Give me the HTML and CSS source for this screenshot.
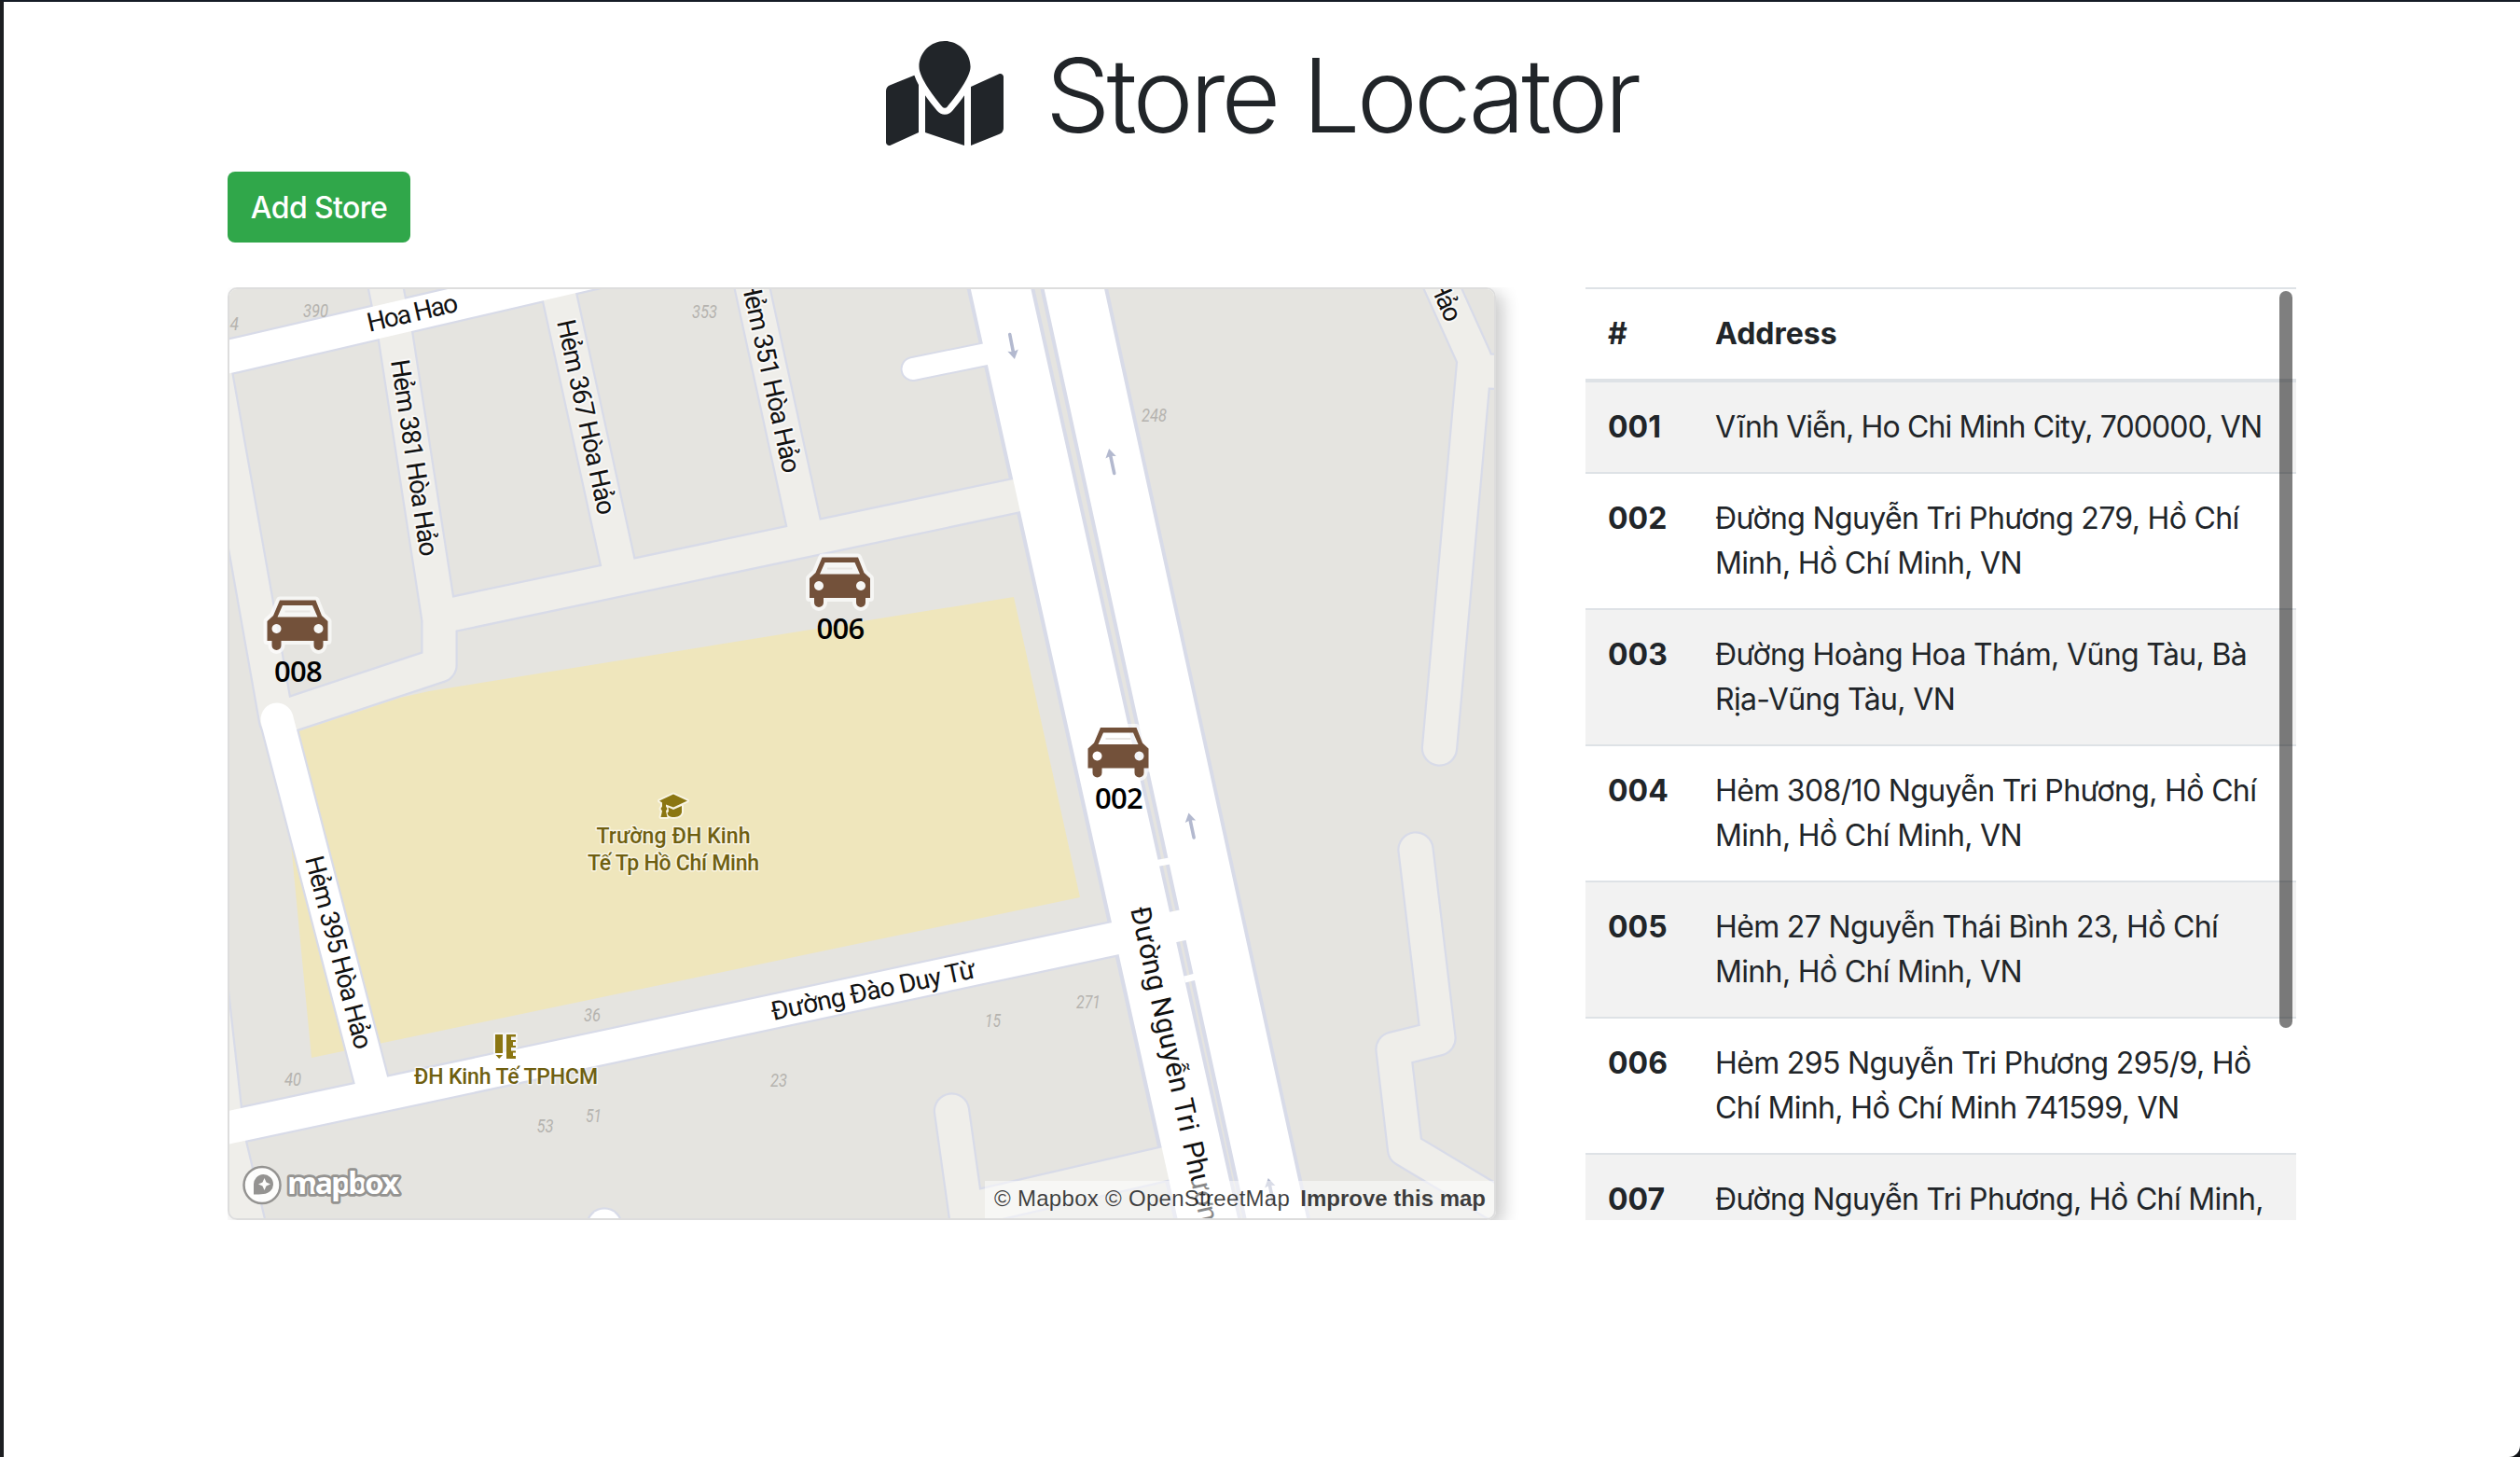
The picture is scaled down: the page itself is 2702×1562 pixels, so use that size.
FILE: index.html
```html
<!DOCTYPE html>
<html lang="en">
<head>
<meta charset="utf-8">
<title>Store Locator</title>
<link rel="stylesheet" href="styles.css">
</head>
<body>
<main class="container">
  <h1 class="title">
    <svg class="title-icon" viewBox="0 0 576 512" aria-hidden="true"><path d="M288 0c-69.59 0-126 56.41-126 126 0 56.26 82.35 158.8 113.9 196.02 6.39 7.54 17.82 7.54 24.2 0C331.65 284.8 414 182.26 414 126 414 56.41 357.59 0 288 0zM20.12 215.95A32.006 32.006 0 0 0 0 245.66v250.32c0 11.32 11.43 19.06 21.94 14.86L160 448V214.92c-8.84-15.98-16.07-31.54-21.25-46.42L20.12 215.95zM288 359.67c-14.07 0-27.38-6.18-36.51-16.96-19.66-23.2-40.57-49.62-59.49-76.72v182l192 64V266c-18.92 27.09-39.82 53.52-59.49 76.72-9.13 10.77-22.44 16.95-36.51 16.95zm266.06-198.51L416 224v288l139.88-55.95A31.996 31.996 0 0 0 576 426.34V176.02c0-11.32-11.43-19.06-21.94-14.86z"/></svg>
    <span class="title-text">Store Locator</span>
  </h1>
  <a class="btn">Add Store</a>
  <div class="row">
    <div class="map-col">
      <div class="map">
        <svg class="map-canvas" viewBox="246 310 1356 996">
          <defs>
            <g id="car">
              <path class="halo" d="M13.5 0h38.5l6.5 16.500 6.500 6v21h-5v5a5 5 0 0 1-10 0v-5h-35v5a5 5 0 0 1-10 0v-5h-5v-21l6.500-6z"/>
              <path class="car-body" fill-rule="evenodd" d="M13.500 0h38.500l6.500 16.500 6.500 6v21h-5v5a5 5 0 0 1-10 0v-5h-35v5a5 5 0 0 1-10 0v-5h-5v-21l6.500-6zM16.500 5.500l-5.500 12.500h43l-5.500-12.500zM10 25.500a5 5 0 1 0 .01 0zM55 25.500a5 5 0 1 0 .01 0z"/>
              <path class="car-glass" d="M19 12h27"/>
            </g>
            <g id="arrow"><path d="M0 26V7" stroke="#b3b9cf" stroke-width="3.600" stroke-linecap="round"/><path d="M0-1l5.800 9.500L0 7l-5.800 1.500z" fill="#b3b9cf"/></g>
            <g id="lanes">
              <path d="M402 250L414 310L424 360L471 664V713L302 769"/>
              <path d="M471 661.500L1100 529"/>
              <path d="M596 300L663 606"/>
              <path d="M797 265L862 563"/>
              <path d="M206 262L296.500 772"/>
              <path d="M226 1060L240.500 1190L246 1228L268 1320"/>
              <path d="M1520 250L1581 385L1543.500 802M1581 397L1630 400"/>
              <path d="M1518 911L1542 1113L1494 1125L1506.500 1232L1622 1301"/>
              <path d="M1020.500 1191L1040 1330M1040 1296L1260 1245"/>
            </g>
            <g id="streets">
              <path d="M230 386L700 277"/>
              <path d="M297 771L400.500 1168"/>
              <path d="M230 1212L1215 1002"/>
              <path d="M648 1314V1340"/>
            </g>
          </defs>
          <rect x="240" y="300" width="1370" height="1010" fill="#e5e4e0"/>
          <path fill="#efe6bc" d="M1087 640L1158 962L334 1134L313 915L302 790L429 748L460 741z"/>
          <g class="lines">
            <g class="edge">
              <use href="#lanes"/>
              <use href="#streets"/>
              <path class="spur-edge" d="M979 395.500L1065 378"/>
              <path class="avenue-edge" d="M1062 260L1302 1340M1141 260L1376 1340"/>
            </g>
            <use href="#lanes" class="lane"/>
            <use href="#streets" class="street"/>
            <path class="spur" d="M979 395.500L1065 378"/>
            <path class="avenue" d="M1062 260L1299 1325M1141 260L1374 1330"/>
            <path class="gap" d="M1238 926L1254 923" stroke-width="7"/>
            <path class="gap" d="M1248 996L1276 990" stroke-width="33"/>
            <path class="gap" d="M1270 1050L1286 1046" stroke-width="7"/>
          </g>
          <use href="#arrow" transform="translate(1087.700 384) rotate(169)"/>
          <use href="#arrow" transform="translate(1189.300 482) rotate(-12)"/>
          <use href="#arrow" transform="translate(1274.700 872.500) rotate(-12)"/>
          <use href="#arrow" transform="translate(1360 1264) rotate(-12)"/>
          <g class="house">
            <text x="237" y="354" textLength="19" lengthAdjust="spacingAndGlyphs">94</text>
            <text x="325" y="339.600" textLength="27" lengthAdjust="spacingAndGlyphs">390</text>
            <text x="742" y="340.700" textLength="27" lengthAdjust="spacingAndGlyphs">353</text>
            <text x="1224" y="452" textLength="27" lengthAdjust="spacingAndGlyphs">248</text>
            <text x="305" y="1164" textLength="18" lengthAdjust="spacingAndGlyphs">40</text>
            <text x="626" y="1094.600" textLength="18" lengthAdjust="spacingAndGlyphs">36</text>
            <text x="575.500" y="1214" textLength="18" lengthAdjust="spacingAndGlyphs">53</text>
            <text x="628" y="1203" textLength="17" lengthAdjust="spacingAndGlyphs">51</text>
            <text x="826" y="1165" textLength="18" lengthAdjust="spacingAndGlyphs">23</text>
            <text x="1056" y="1100.500" textLength="17" lengthAdjust="spacingAndGlyphs">15</text>
            <text x="1154" y="1081" textLength="26" lengthAdjust="spacingAndGlyphs">271</text>
          </g>
          <g class="road-name">
            <text transform="translate(396 355.700) rotate(-13)" textLength="99">Hoa Hao</text>
            <text transform="translate(419 387) rotate(81.400)" textLength="213">Hẻm 381 Hòa Hảo</text>
            <text transform="translate(597 345) rotate(77.900)" textLength="213">Hẻm 367 Hòa Hảo</text>
            <text transform="translate(794.300 300.500) rotate(77.600)" textLength="213">Hẻm 351 Hòa Hảo</text>
            <text transform="translate(1551 347) rotate(66)" text-anchor="end" textLength="98">Hòa Hảo</text>
            <text transform="translate(327 920.500) rotate(75.300)" textLength="213">Hẻm 395 Hòa Hảo</text>
            <text transform="translate(829 1094) rotate(-11.900)" textLength="223">Đường Đào Duy Từ</text>
            <text class="big" transform="translate(1212 974.500) rotate(77.400)" textLength="246">Đường Nguyễn Tri</text>
            <text class="big" transform="translate(1268 1226) rotate(77.400)" textLength="104">Phương</text>
          </g>
          <g class="poi">
            <g transform="translate(706 850)">
              <path class="poi-icon" d="M16 1.500L31 8.500L16 15.500L8 12.500V14.500L9.500 17L8 19.500L9.500 26H2.500L4 19.500L2.500 17L4 14.500V10.500L1 8.500zM10.500 15.500L16 18L25 14V21c-1 4-5 5-9 5-3 0-6-1-6.500-4.500l1.500-1.500z"/>
            </g>
            <path class="poi-icon" d="M531 1109h8v20h-8zM531.500 1131h7.500l-3.800 4zM543 1109h10v2.500h-5v3.500h5v2h-3v4h3v2h-5v3.500h5v2h-3v3.500h3v3h-10z"/>
            <text x="639.500" y="904" textLength="165">Trường ĐH Kinh</text>
            <text x="630" y="933" textLength="184">Tế Tp Hồ Chí Minh</text>
            <text x="444" y="1162" textLength="197">ĐH Kinh Tế TPHCM</text>
          </g>
          <g class="store">
            <use href="#car" x="868" y="597.500"/><text x="901" y="685">006</text>
            <use href="#car" x="286.500" y="643.500"/><text x="319.500" y="730.500">008</text>
            <use href="#car" x="1166.500" y="780"/><text x="1199.500" y="867">002</text>
          </g>
          <g class="logo">
            <circle cx="281" cy="1270.500" r="19.500"/>
            <path class="logo-mark" fill-rule="evenodd" d="M272 1280.500V1270a10.500 10.500 0 1 1 10.500 10c-3 .5-7 .5-10.500.5zM283.500 1263l-2 4.500-4.500 2 4.500 2 2 4.500 2-4.500 4.500-2-4.500-2z"/>
            <text x="308" y="1280" textLength="120">mapbox</text>
          </g>
        </svg>
        <div class="attribution"><span>© Mapbox © OpenStreetMap</span><strong>Improve this map</strong></div>
      </div>
    </div>
    <div class="list-col">
      <table class="table">
        <thead><tr><th class="num">#</th><th>Address</th></tr></thead>
        <tbody>
          <tr><th>001</th><td class="tight">Vĩnh Viễn, Ho Chi Minh City, 700000, VN</td></tr>
          <tr><th>002</th><td>Đường Nguyễn Tri Phương 279, Hồ Chí<br>Minh, Hồ Chí Minh, VN</td></tr>
          <tr><th>003</th><td>Đường Hoàng Hoa Thám, Vũng Tàu, Bà<br>Rịa-Vũng Tàu, VN</td></tr>
          <tr><th>004</th><td>Hẻm 308/10 Nguyễn Tri Phương, Hồ Chí<br>Minh, Hồ Chí Minh, VN</td></tr>
          <tr><th>005</th><td>Hẻm 27 Nguyễn Thái Bình 23, Hồ Chí<br>Minh, Hồ Chí Minh, VN</td></tr>
          <tr><th>006</th><td>Hẻm 295 Nguyễn Tri Phương 295/9, Hồ<br>Chí Minh, Hồ Chí Minh 741599, VN</td></tr>
          <tr><th>007</th><td>Đường Nguyễn Tri Phương, Hồ Chí Minh,</td></tr>
        </tbody>
      </table>
      <div class="scroll-thumb"></div>
    </div>
  </div>
</main>
</body>
</html>
```
FILE: styles.css
```css
* { box-sizing: border-box; }
html { height: 100%; overflow: hidden; background: #111418; }
body {
  margin: 0;
  height: 1562px;
  border-left: 4px solid #1c1e21;
  border-top: 2px solid #151c26;
  border-bottom-right-radius: 12px;
  background: #fff;
  color: #212529;
  font: 400 32px/48px Inter, "Noto Sans", sans-serif;
  overflow: hidden;
}
.container { width: 2218px; margin: 0 auto 0 240px; }
.title {
  display: flex;
  justify-content: center;
  align-items: center;
  gap: 45px;
  height: 182px;
  margin: 0;
  padding-top: 14px;
  font-size: 110px;
  font-weight: 320;
  line-height: 132px;
}
.title-icon { width: 126px; height: 112px; margin-bottom: -2px; transform: translateY(-1px); fill: #212529; }
.title-text { padding-top: 4px; letter-spacing: -3.900px; white-space: nowrap; }
.btn {
  display: block;
  width: 196px;
  height: 76px;
  border-radius: 8px;
  background: #30a74a;
  color: #fff;
  font-weight: 450;
  line-height: 77px;
  text-align: center;
  letter-spacing: -.6px;
}
.row { display: flex; height: 1000px; margin-top: 48px; }
.map-col { width: 1426px; overflow: hidden; }
.map {
  position: relative;
  width: 1360px;
  height: 1000px;
  border: 2px solid #ddd;
  border-radius: 10px;
  overflow: hidden;
  box-shadow: 8px 6px 18px rgba(0, 0, 0, .2);
}
.map-canvas { display: block; width: 1356px; height: 996px; }
.lines { fill: none; stroke-linecap: round; stroke-linejoin: round; }
.edge { stroke: #d8dbe8; stroke-width: 39.500px; }
.lane { stroke: #efeeea; stroke-width: 35px; }
.street { stroke: #fff; stroke-width: 35px; }
.edge .spur-edge { stroke-width: 27px; }
.spur { stroke: #fff; stroke-width: 23px; }
.edge .avenue-edge { stroke-width: 71px; }
.avenue { stroke: #fff; stroke-width: 63px; }
.lines .gap { stroke: #fff; stroke-linecap: butt; }
.house { font: italic 400 20px Roboto, sans-serif; fill: #b5b3af; }
.road-name { font: 400 28px Roboto, sans-serif; fill: #111; }
.road-name text { stroke: rgba(255, 255, 255, .65); stroke-width: 4px; paint-order: stroke; stroke-linejoin: round; }
.road-name .big { font-size: 30px; }
.poi text { font: 500 23px Roboto, sans-serif; fill: #6f5f10; stroke: rgba(255, 255, 255, .6); stroke-width: 3px; paint-order: stroke; stroke-linejoin: round; }
.poi-icon { fill: #8b7612; stroke: rgba(255, 255, 255, .6); stroke-width: 4px; paint-order: stroke; stroke-linejoin: round; }
.store text { font: 600 31px "Open Sans", sans-serif; fill: #000; text-anchor: middle; letter-spacing: -.8px; }
.halo { fill: rgba(255, 255, 255, .65); stroke: rgba(255, 255, 255, .65); stroke-width: 8px; stroke-linejoin: round; }
.car-body { fill: #73513a; }
.car-glass { stroke: #e9e6e3; stroke-width: 2px; }
.logo circle { fill: rgba(255, 255, 255, .9); stroke: #949391; stroke-width: 2.500px; }
.logo-mark { fill: #949391; }
.logo text { font: 700 33px "Open Sans", sans-serif; fill: #fff; stroke: #949391; stroke-width: 5.500px; paint-order: stroke; stroke-linejoin: round; }
.attribution {
  position: absolute;
  right: 0;
  bottom: 0;
  display: flex;
  justify-content: space-between;
  width: 546px;
  height: 40px;
  padding: 0 9px 0 10px;
  background: rgba(255, 255, 255, .5);
  color: rgba(0, 0, 0, .75);
  font: 24px/38px "Liberation Sans", Arial, sans-serif;
  white-space: nowrap;
}
.attribution span { letter-spacing: .29px; }
.list-col { position: relative; width: 762px; margin-left: 30px; overflow: hidden; }
.table { width: 762px; border-spacing: 0; table-layout: fixed; }
.table th, .table td {
  padding: 24px 0 24px 24px;
  border-top: 2px solid #dee2e6;
  text-align: left;
  vertical-align: top;
  white-space: nowrap;
}
.table th { font-weight: 700; }
.table td { letter-spacing: -.650px; }
.table td.tight { letter-spacing: -.860px; }
.table .num { width: 115px; }
.table thead th { border-bottom: 2px solid #dee2e6; }
.table tbody tr:nth-child(odd) { background: #f2f2f2; }
.scroll-thumb {
  position: absolute;
  top: 4px;
  right: 4px;
  width: 14px;
  height: 790px;
  border-radius: 7px;
  background: rgba(0, 0, 0, .5);
}
```
